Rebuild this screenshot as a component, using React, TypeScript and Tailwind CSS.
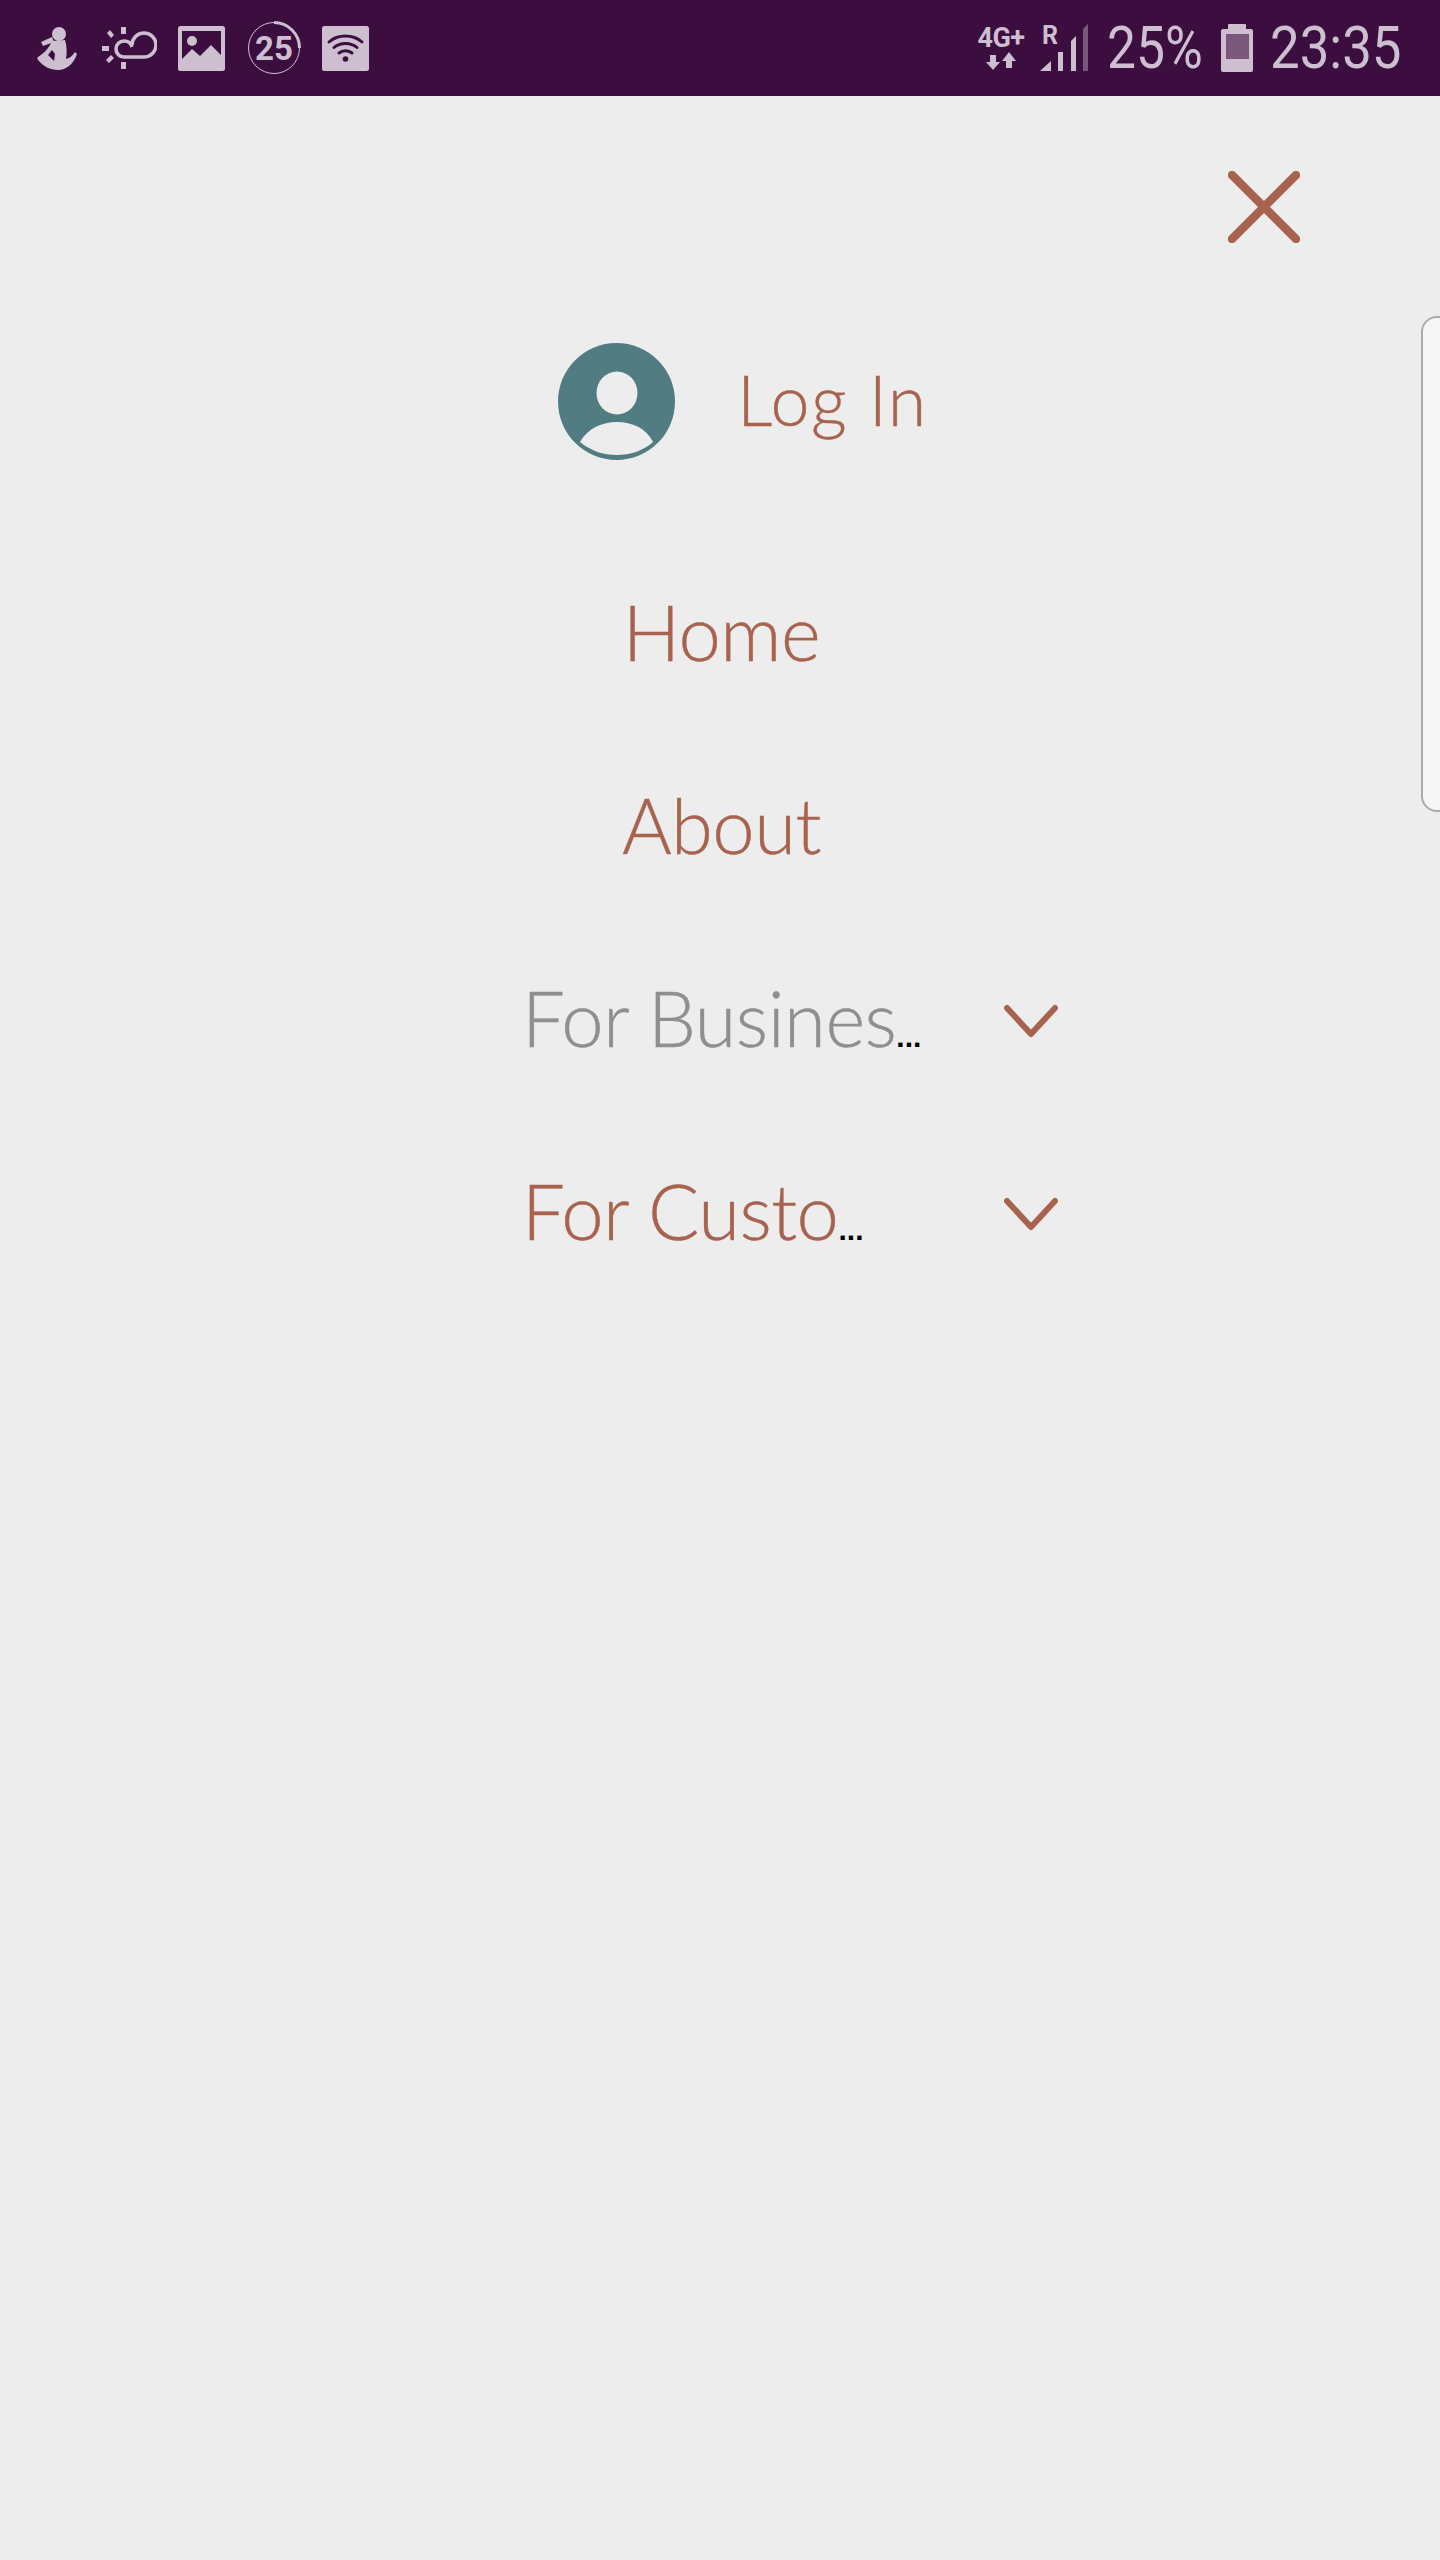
const clay = "#a8634f";
const ink = "#cdbfd0";
const dim = "#7a587c";

function Runner() {
  return (
    <svg width="40" height="46" viewBox="0 0 40 46" fill={ink}>
      <circle cx="22" cy="9" r="7" />
      <path d="M15 12 L4 17 L6 21 L17 17 Z" />
      <path d="M15 16 C12 22 10 26 1 32 C0 33 0 34 2 36 C6 41 13 45 21 45 C30 45 37 38 40 29 L38 27 C35 31 33 33 29 34 C30 28 30 21 28 15 Z" />
      <path d="M11 30 L17 36 L18 29 L15 25 Z" fill="#3c0e40" />
    </svg>
  );
}

function SunCloud() {
  return (
    <svg width="55" height="42" viewBox="0 0 55 42" fill="none">
      <path d="M22 30 H42 A12 12 0 1 0 30 18 M22 30 A8 8 0 0 1 22 14 C26 14 29 16 30 20" stroke={ink} strokeWidth="3.5" />
      <rect x="19" y="0" width="5" height="7" fill={ink} />
      <rect x="19" y="35" width="5" height="7" fill={ink} />
      <rect x="0" y="19" width="7" height="5" fill={ink} />
      <path d="M5 6 L8 3 L12 8 L9 11 Z M4 33 L9 28 L12 31 L7 36 Z" fill={ink} />
    </svg>
  );
}

function Picture() {
  return (
    <svg width="47" height="45" viewBox="0 0 47 45">
      <rect x="0" y="0" width="47" height="45" rx="2.5" fill={ink} />
      <rect x="4" y="5" width="39" height="30" fill="#3c0e40" />
      <circle cx="14" cy="15" r="5" fill={ink} />
      <path d="M4 33 L14 23 L22 30 L33 19 L43 29 V40 H4 Z" fill={ink} />
    </svg>
  );
}

function Timer() {
  return (
    <div className="relative flex h-[54px] w-[54px] items-center justify-center">
      <svg className="absolute inset-0" width="54" height="54" viewBox="0 0 54 54" fill="none">
        <circle cx="27" cy="27" r="25.5" stroke={ink} strokeWidth="1" />
        <path d="M27 1.5 A25.5 25.5 0 0 1 52.5 27" stroke={ink} strokeWidth="3" />
      </svg>
      <span className="relative font-['Roboto',sans-serif] text-[33px] font-bold leading-none text-[#cdbfd0]">25</span>
    </div>
  );
}

function WifiBox() {
  return (
    <svg width="47" height="45" viewBox="0 0 47 45" fill="none">
      <rect width="47" height="45" rx="2.5" fill={ink} />
      <path d="M7 16 C16 8 31 8 40 16 M12 21.5 C18 16 29 16 35 21.5 M17 27 C20.5 24 26.5 24 30 27" stroke="#3c0e40" strokeWidth="3" strokeLinecap="round" />
      <circle cx="23.5" cy="33" r="2.8" fill="#3c0e40" />
    </svg>
  );
}

function Network() {
  return (
    <div className="flex w-[52px] flex-col items-center">
      <span className="whitespace-nowrap font-['Roboto',sans-serif] text-[27px] font-bold leading-[24px] tracking-[-0.5px] text-[#cdbfd0]">4G+</span>
      <svg className="mt-[2px]" width="30" height="19" viewBox="0 0 30 19" fill={ink}>
        <path d="M4 3 H10 V10 H14 L7 18 L0 10 H4 Z" />
        <path d="M20 16 H26 V9 H30 L23 0 L16 9 H20 Z" />
      </svg>
    </div>
  );
}

function Signal() {
  return (
    <div className="relative h-[48px] w-[48px]">
      <span className="absolute left-[2px] top-[2px] font-['Roboto',sans-serif] text-[25px] font-bold leading-[20px] text-[#cdbfd0]">R</span>
      <svg className="absolute inset-0" width="48" height="48" viewBox="0 0 48 48" fill={ink}>
        <path d="M0 47 L11 37 V47 Z" />
        <rect x="18" y="28" width="5" height="19" />
        <path d="M31 17 L36 12 V47 H31 Z" />
        <path d="M43 5 L48 0 V47 H43 Z" fill={dim} />
      </svg>
    </div>
  );
}

function Battery() {
  return (
    <svg width="32" height="48" viewBox="0 0 32 48">
      <path d="M8 0 H24 Q25 0 25 1 V5 H30 Q32 5 32 7 V46 Q32 48 30 48 H2 Q0 48 0 46 V7 Q0 5 2 5 H7 V1 Q7 0 8 0 Z" fill={ink} />
      <rect x="5" y="10" width="23" height="25" fill={dim} />
    </svg>
  );
}

function Chevron() {
  return (
    <svg width="54" height="34" viewBox="0 0 54 34" fill="none">
      <path d="M3 4 L27 30 L51 4" stroke={clay} strokeWidth="6" strokeLinecap="round" strokeLinejoin="round" />
    </svg>
  );
}

const menu =
  "font-['Lato',sans-serif] text-[76px] font-light leading-none tracking-[-0.5px] whitespace-nowrap [-webkit-text-stroke:0.4px]";

function Dots() {
  return <span className="font-['Liberation_Sans',sans-serif] text-[30px] font-bold tracking-[0px] text-black [-webkit-text-stroke:0px]">...</span>;
}

export default function App() {
  return (
    <div className="relative h-[2560px] w-[1440px] overflow-hidden bg-[#ededed]">
      <header className="flex h-[96px] items-center justify-between bg-[#3c0e40] pl-[37px] pr-[38px]">
        <div className="flex items-center">
          <Runner />
          <div className="ml-[25px]"><SunCloud /></div>
          <div className="ml-[21px]"><Picture /></div>
          <div className="ml-[22px]"><Timer /></div>
          <div className="ml-[21px]"><WifiBox /></div>
        </div>
        <div className="flex items-center">
          <Network />
          <div className="ml-[13px]"><Signal /></div>
          <span className="ml-[19px] w-[95px] origin-left scale-x-[0.86] whitespace-nowrap font-['Roboto',sans-serif] text-[60px] font-normal leading-none text-[#cdbfd0]">25%</span>
          <div className="ml-[19px]"><Battery /></div>
          <span className="ml-[17px] w-[132px] origin-left scale-x-[0.88] whitespace-nowrap font-['Roboto',sans-serif] text-[60px] font-normal leading-none text-[#cdbfd0]">23:35</span>
        </div>
      </header>

      <div className="flex justify-end pr-[140px] pt-[75px]">
        <svg width="72" height="72" viewBox="0 0 72 72" fill="none">
          <path d="M4 4 L68 68 M68 4 L4 68" stroke={clay} strokeWidth="8.5" strokeLinecap="round" />
        </svg>
      </div>

      <nav className="flex flex-col">
        <div className="mt-[100px] flex h-[117px] items-center pl-[558px]">
          <svg width="117" height="117" viewBox="0 0 117 117">
            <circle cx="58.5" cy="58.5" r="58.5" fill="#507c82" />
            <ellipse cx="59" cy="50" rx="20.5" ry="21.5" fill="#ededed" />
            <path d="M22 99 C30 85 44 79 59 79 C74 79 88 85 95 99 C85 108 72 112 59 112 C45 112 33 108 22 99 Z" fill="#ededed" />
          </svg>
          <span className="mb-[6px] ml-[62px] whitespace-nowrap font-['Lato',sans-serif] text-[70px] font-light leading-none tracking-[1.5px] text-[#a8634f] [-webkit-text-stroke:0.4px]">Log In</span>
        </div>

        <div className={`${menu} mt-[125px] flex h-[100px] items-center justify-center pb-[6px] pl-[3px] text-[#a8634f]`}>Home</div>
        <div className={`${menu} mt-[93px] flex h-[100px] items-center justify-center pb-[6px] pl-[3px] text-[#a8634f]`}>About</div>

        <div className="mt-[93px] flex h-[100px] items-center pl-[522px]">
          <div className={`${menu} w-[482px] pb-[6px] text-[#8f8f8f]`}>For Busines<Dots /></div>
          <Chevron />
        </div>
        <div className="mt-[93px] flex h-[100px] items-center pl-[522px]">
          <div className={`${menu} w-[482px] pb-[6px] text-[#a8634f]`}>For Custo<Dots /></div>
          <Chevron />
        </div>
      </nav>

      <div className="absolute left-[1421px] top-[316px] h-[496px] w-[30px] rounded-l-[16px] border-2 border-[#ababab] bg-[#f6f6f6]" />
    </div>
  );
}
